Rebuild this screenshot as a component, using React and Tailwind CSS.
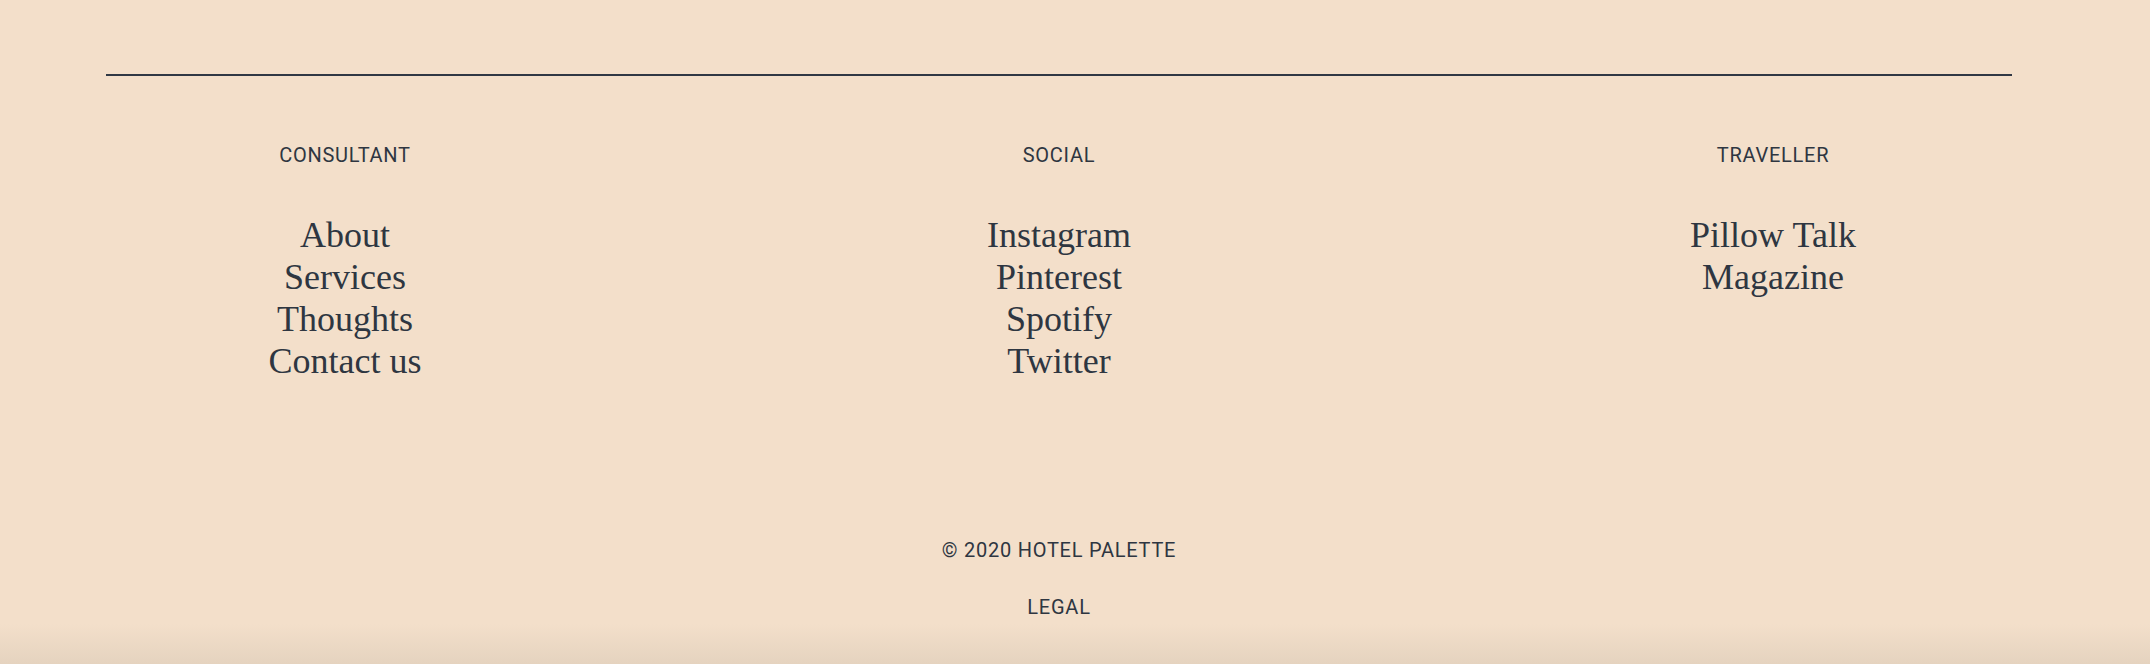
const columns = [
  { title: 'CONSULTANT', links: ['About', 'Services', 'Thoughts', 'Contact us'] },
  { title: 'SOCIAL', links: ['Instagram', 'Pinterest', 'Spotify', 'Twitter'] },
  { title: 'TRAVELLER', links: ['Pillow Talk', 'Magazine'] },
];

const sans = "font-['Roboto','Liberation_Sans',Arial,sans-serif]";
const serif = "font-['Liberation_Serif','Times_New_Roman',serif]";

export default function App() {
  return (
    <footer className="relative h-[664px] w-full overflow-hidden bg-[#f3dfca] text-[#2e3641]">
      <div className="pl-[106px] pr-[138px] pt-[74px]">
        <div className="h-[2px] w-full bg-[#303844]" />

        <div className="mt-[67px] grid grid-cols-3 gap-x-[236px]">
          {columns.map((col) => (
            <div key={col.title} className="flex flex-col items-center text-center">
              <h4 className={`${sans} text-[20px] leading-[24px] tracking-[0.75px]`}>{col.title}</h4>
              <ul className="mt-[47px]">
                {col.links.map((link) => (
                  <li key={link} className={`${serif} text-[36px] leading-[42px]`}>
                    <a href="#">{link}</a>
                  </li>
                ))}
              </ul>
            </div>
          ))}
        </div>

        <div className={`${sans} mt-[156px] flex flex-col items-center text-[20px] leading-[24px] tracking-[0.75px]`}>
          <p>© 2020 HOTEL PALETTE</p>
          <a href="#" className="mt-[33px]">LEGAL</a>
        </div>
      </div>

      <div className="absolute bottom-0 left-0 right-0 h-[40px] bg-gradient-to-b from-[#f3dfca] to-[#e5d3bf]" />
    </footer>
  );
}
